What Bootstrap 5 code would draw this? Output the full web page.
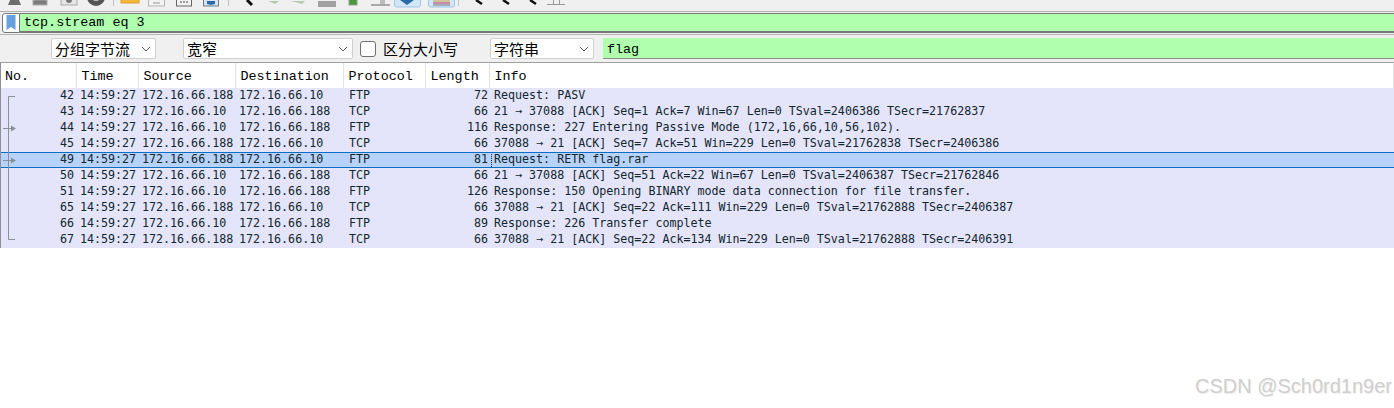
<!DOCTYPE html>
<html lang="en">

<head>
    <meta charset="UTF-8">
    <title>Wireshark</title>
    <link href="https://cdn.jsdelivr.net/npm/bootstrap@5.3.3/dist/css/bootstrap.min.css" rel="stylesheet">
    <style>
        html, body { height: 408px; overflow: hidden; background: #fff; }
        .shark { width: 1394px; height: 408px; position: relative; background: #fff; }

        /* toolbar, cut off at the top of the picture */
        .tool-strip { height: 13px; background: #f0f0f0; overflow: hidden; }
        .tool-strip svg { display: block; }

        /* display filter */
        .filter-row { height: 21px; background: #f0f0f0; padding-left: 2px; }
        .filter-box { height: 20px; border-top: 1px solid #777; border-bottom: 2px solid #777; background: #afffaf; flex: 1; font: 13.4px/18px "Liberation Mono", monospace; color: #000; padding-left: 4px; }
        .mark-btn { width: 18px; height: 20px; background: #fff; border: 1px solid #777; border-radius: 3px 0 0 3px; }

        /* search bar */
        .find-row { height: 29px; background: #f0f0f0; border-top: 1px solid #b4b4b4; border-bottom: 1px solid #a0a0a0; font: 15px "Noto Sans CJK SC", sans-serif; color: #000; }
        .combo { height: 21px; background: #fff; border: 1px solid #d0d0d0; border-radius: 2px; padding-left: 3px; line-height: 19px; }
        .combo svg { margin-right: 4px; }
        .combo-a { width: 105px; margin-left: 51px; }
        .combo-b { width: 170px; margin-left: 27px; }
        .combo-c { width: 104px; margin-left: 32px; }
        .tick { width: 16px; height: 16px; border: 1px solid #707070; border-radius: 3px; background: #fff; margin-left: 7px; margin-right: 7px; }
        .find-input { flex: 1; height: 21px; margin-left: 9px; background: #afffaf; border-bottom: 1px solid #8c8c8c; font: 13.4px/24px "Liberation Mono", monospace; padding-left: 4px; }

        /* packet list */
        .packets { width: 100%; border-collapse: collapse; table-layout: fixed; font: 11.67px/15px "DejaVu Sans Mono", monospace; color: #12272e; }
        .packets th { height: 25px; font: 400 13.4px/23px "Liberation Mono", monospace; color: #000; border-right: 1px solid #e4e4e4; padding: 2px 0 0 5px; background: #fff; }
        .packets td { height: 16px; padding: 0 0 1px; white-space: nowrap; background: #e4e4fa; overflow: visible; }
        .packets .num { text-align: right; padding-right: 2px; }
        .packets .len { text-align: right; padding-right: 1px; }
        .packets .time { padding-left: 4px; }
        .packets .src { padding-left: 4px; }
        .packets .dst { padding-left: 4px; }
        .packets .proto { padding-left: 6px; }
        .packets .info { padding-left: 5px; }
        .packets tr.picked td { background-color: #b7d3fb; box-shadow: inset 0 1px 0 #0a6fc4, inset 0 -1px 0 #0a6fc4; }
        .packets tr.picked td.info { background-image: linear-gradient(#222 50%, transparent 50%); background-size: 1px 2px; background-repeat: repeat-y; background-position: 2px 0; }

        /* grey line down the left of the list, sits over the rows */
        .edge { position: absolute; left: 0; top: 62px; width: 1px; height: 186px; background: #8a8f9a; }
        .rel-lines { position: absolute; left: 0; top: 88px; }

        .mark-text { position: absolute; right: 2px; bottom: 10px; font: 20px "Liberation Sans", sans-serif; color: #cfcfcf; text-shadow: 1px 1px 1px #eee; }
    </style>
</head>

<body>
    <div class="shark">
        <!-- toolbar icons -->
        <div class="tool-strip">
            <svg width="1394" height="13" viewBox="0 0 1394 13">
                <rect x="0" y="11" width="1394" height="1" fill="#b0b0b0" />
                <path d="M10 0 H19 L21 5 H8 Z" fill="#6e6e6e" />
                <rect x="33" y="0" width="14" height="5" fill="#7c7c7c" stroke="#aaa" />
                <rect x="61" y="-2" width="16" height="7" fill="#e6e6e6" stroke="#aaa" />
                <circle cx="69" cy="0" r="3" fill="#777" />
                <circle cx="96" cy="-3" r="9" fill="#555" />
                <circle cx="96" cy="-3" r="4" fill="#ccc" />
                <rect x="113" y="0" width="1" height="6" fill="#c4c4c4" />
                <rect x="121" y="-2" width="18" height="5" fill="#f5b83a" stroke="#d9a02c" />
                <rect x="148.500" y="-2" width="16" height="8" fill="#f2f2f2" stroke="#b5b5b5" />
                <path d="M153 3 H160" stroke="#999" />
                <rect x="176.500" y="-2" width="15" height="8" fill="#f2f2f2" stroke="#666" />
                <path d="M180 2 H188" stroke="#444" stroke-dasharray="2 1" />
                <rect x="203.500" y="-2" width="15" height="8" fill="#dbe3ee" stroke="#6a7a8a" />
                <path d="M207 1 H215 V4 L211 5 L207 4 Z" fill="#2a6aa8" />
                <rect x="228" y="0" width="1" height="6" fill="#c4c4c4" />
                <path d="M247 0 L252 5" stroke="#111" stroke-width="3" fill="none" />
                <path d="M268 1 L279 1 L275 4 Z M291 1 L305 1 L302 4 Z" fill="#bcc8b4" />
                <path d="M318 2 H336 M318 4 H336 M318 6 H336" stroke="#555" fill="none" />
                <rect x="349" y="-1" width="8" height="6" fill="#4a9a3a" stroke="#999" />
                <path d="M371 5 H390" stroke="#aaa" stroke-width="2" />
                <rect x="380" y="0" width="5" height="4" fill="#bbb" />
                <rect x="394.500" y="-3" width="26" height="10" rx="2" fill="#d3e6f8" stroke="#9cc7ec" />
                <path d="M400 0 H414 L407 5 Z" fill="#2a6aa8" />
                <rect x="428.500" y="-3" width="26" height="10" rx="2" fill="#d3e6f8" stroke="#9cc7ec" />
                <path d="M433 1 H450" stroke="#c9a03a" />
                <path d="M433 3 H450" stroke="#b35" />
                <path d="M433 5 H450" stroke="#777" />
                <rect x="458" y="0" width="1" height="6" fill="#c4c4c4" />
                <path d="M476 0 L482 4 M503 0 L509 4 M530 0 L536 4" stroke="#111" stroke-width="2.500" fill="none" />
                <path d="M547 4.500 H565 M553.500 0 V5 M559.500 0 V5" stroke="#999" fill="none" />
            </svg>
        </div>

        <!-- display filter -->
        <div class="filter-row d-flex align-items-start">
            <div class="mark-btn d-flex justify-content-center">
                <svg width="10" height="17" viewBox="0 0 10 17">
                    <path d="M0.500 1 H9.500 V16 L5 13 L0.500 16 Z" fill="#6a9fe0" />
                </svg>
            </div>
            <div class="filter-box">tcp.stream eq 3</div>
        </div>

        <!-- search bar -->
        <div class="find-row d-flex align-items-center">
            <div class="combo combo-a d-flex justify-content-between align-items-center">分组字节流
                <svg width="10" height="6" viewBox="0 0 10 6"><path d="M1 1 L5 5 L9 1" stroke="#555" fill="none" /></svg>
            </div>
            <div class="combo combo-b d-flex justify-content-between align-items-center">宽窄
                <svg width="10" height="6" viewBox="0 0 10 6"><path d="M1 1 L5 5 L9 1" stroke="#555" fill="none" /></svg>
            </div>
            <div class="tick"></div>
            <span>区分大小写</span>
            <div class="combo combo-c d-flex justify-content-between align-items-center">字符串
                <svg width="10" height="6" viewBox="0 0 10 6"><path d="M1 1 L5 5 L9 1" stroke="#555" fill="none" /></svg>
            </div>
            <div class="find-input">flag</div>
        </div>

        <!-- packet list -->
        <table class="packets">
            <colgroup>
                <col style="width: 76px">
                <col style="width: 62px">
                <col style="width: 97px">
                <col style="width: 108px">
                <col style="width: 82px">
                <col style="width: 64px">
                <col>
            </colgroup>
            <thead>
                <tr>
                    <th>No.</th>
                    <th>Time</th>
                    <th>Source</th>
                    <th>Destination</th>
                    <th>Protocol</th>
                    <th>Length</th>
                    <th>Info</th>
                </tr>
            </thead>
            <tbody id="packetRows"></tbody>
        </table>

        <div class="edge"></div>

        <!-- related packet marks -->
        <svg class="rel-lines" width="20" height="160" viewBox="0 0 20 160">
            <path d="M15 8.500 H8.500 V151.500 H15" stroke="#8a8f9a" fill="none" />
            <path d="M3 40.500 H11 M3 72.500 H11" stroke="#8a8f9a" fill="none" />
            <path d="M11 37.500 L16 40.500 L11 43.500 Z M11 69.500 L16 72.500 L11 75.500 Z" fill="#8a8f9a" />
        </svg>

        <div class="mark-text">CSDN @Sch0rd1n9er</div>
    </div>

    <script src="https://cdn.jsdelivr.net/npm/bootstrap@5.3.3/dist/js/bootstrap.bundle.min.js"></script>
    <script>
        const A = '172.16.66.188';
        const B = '172.16.66.10';
        const packets = [
            [42, A, B, 'FTP', 72, 'Request: PASV'],
            [43, B, A, 'TCP', 66, '21 → 37088 [ACK] Seq=1 Ack=7 Win=67 Len=0 TSval=2406386 TSecr=21762837'],
            [44, B, A, 'FTP', 116, 'Response: 227 Entering Passive Mode (172,16,66,10,56,102).'],
            [45, A, B, 'TCP', 66, '37088 → 21 [ACK] Seq=7 Ack=51 Win=229 Len=0 TSval=21762838 TSecr=2406386'],
            [49, A, B, 'FTP', 81, 'Request: RETR flag.rar'],
            [50, B, A, 'TCP', 66, '21 → 37088 [ACK] Seq=51 Ack=22 Win=67 Len=0 TSval=2406387 TSecr=21762846'],
            [51, B, A, 'FTP', 126, 'Response: 150 Opening BINARY mode data connection for file transfer.'],
            [65, A, B, 'TCP', 66, '37088 → 21 [ACK] Seq=22 Ack=111 Win=229 Len=0 TSval=21762888 TSecr=2406387'],
            [66, B, A, 'FTP', 89, 'Response: 226 Transfer complete'],
            [67, A, B, 'TCP', 66, '37088 → 21 [ACK] Seq=22 Ack=134 Win=229 Len=0 TSval=21762888 TSecr=2406391']
        ];

        const rows = document.getElementById('packetRows');
        packets.forEach(p => {
            const tr = document.createElement('tr');
            if (p[0] === 49) tr.className = 'picked';
            tr.innerHTML = `<td class="num">${p[0]}</td><td class="time">14:59:27</td><td class="src">${p[1]}</td>` +
                `<td class="dst">${p[2]}</td><td class="proto">${p[3]}</td><td class="len">${p[4]}</td><td class="info">${p[5]}</td>`;
            rows.appendChild(tr);
        });
    </script>
</body>

</html>
